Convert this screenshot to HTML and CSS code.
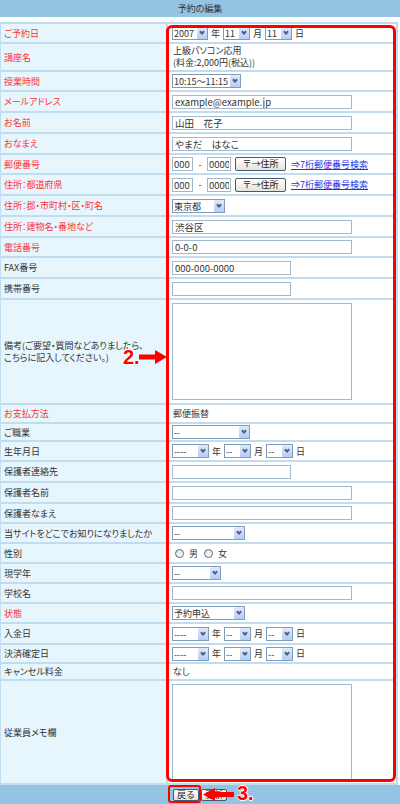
FILE: index.html
```html
<!DOCTYPE html>
<html lang="ja">
<head>
	<meta charset="UTF-8">
	<title>予約の編集</title>
	<link rel="stylesheet" href="styles.css">
</head>
<body>
<div class="page">
	<div class="title">予約の編集</div>
	<div class="form">
		<div class="row h20"><div class="label req">ご予約日</div><div class="value">
			<span class="sel w36"><select><option>2007</option></select></span>年
			<span class="sel w27"><select><option>11</option></select></span>月
			<span class="sel w27"><select><option>11</option></select></span>日
		</div></div>
		<div class="row h28"><div class="label req">講座名</div><div class="value text multi">上級パソコン応用<br>(料金:2,000円(税込))</div></div>
		<div class="row h20"><div class="label req">授業時間</div><div class="value">
			<span class="sel w69"><select><option>10:15〜11:15</option></select></span>
		</div></div>
		<div class="row"><div class="label req">メールアドレス</div><div class="value"><input class="txt wide" type="text" value="example@example.jp"></div></div>
		<div class="row"><div class="label req">お名前</div><div class="value"><input class="txt wide" type="text" value="山田　花子"></div></div>
		<div class="row"><div class="label req">おなまえ</div><div class="value"><input class="txt wide" type="text" value="やまだ　はなこ"></div></div>
		<div class="row h20"><div class="label req">郵便番号</div><div class="value zip">
			<input class="txt zip1" type="text" value="000"><span class="dash">-</span><input class="txt zip2" type="text" value="0000">
			<button class="btn addr">〒→住所</button><a href="#">⇒7桁郵便番号検索</a>
		</div></div>
		<div class="row"><div class="label req">住所：都道府県</div><div class="value zip">
			<input class="txt zip1" type="text" value="000"><span class="dash">-</span><input class="txt zip2" type="text" value="0000">
			<button class="btn addr">〒→住所</button><a href="#">⇒7桁郵便番号検索</a>
		</div></div>
		<div class="row"><div class="label req">住所：郡・市町村・区・町名</div><div class="value">
			<span class="sel w53"><select><option>東京都</option></select></span>
		</div></div>
		<div class="row"><div class="label req">住所：建物名・番地など</div><div class="value"><input class="txt wide" type="text" value="渋谷区"></div></div>
		<div class="row h20"><div class="label req">電話番号</div><div class="value"><input class="txt wide" type="text" value="0-0-0"></div></div>
		<div class="row"><div class="label">FAX番号</div><div class="value"><input class="txt narrow" type="text" value="000-000-0000"></div></div>
		<div class="row"><div class="label">携帯番号</div><div class="value"><input class="txt narrow" type="text"></div></div>
		<div class="row h105"><div class="label multi">備考(ご要望・質問などありましたら、<br>こちらに記入してください。)</div><div class="value"><textarea class="area"></textarea></div></div>
		<div class="row h19"><div class="label req">お支払方法</div><div class="value text">郵便振替</div></div>
		<div class="row h18"><div class="label">ご職業</div><div class="value">
			<span class="sel w78"><select><option>--</option></select></span>
		</div></div>
		<div class="row h20"><div class="label">生年月日</div><div class="value">
			<span class="sel w37"><select><option>----</option></select></span>年
			<span class="sel w27"><select><option>--</option></select></span>月
			<span class="sel w27"><select><option>--</option></select></span>日
		</div></div>
		<div class="row"><div class="label">保護者連絡先</div><div class="value"><input class="txt narrow" type="text"></div></div>
		<div class="row"><div class="label">保護者名前</div><div class="value"><input class="txt wide" type="text"></div></div>
		<div class="row h20"><div class="label">保護者なまえ</div><div class="value"><input class="txt wide" type="text"></div></div>
		<div class="row h20"><div class="label">当サイトをどこでお知りになりましたか</div><div class="value">
			<span class="sel w73"><select><option>--</option></select></span>
		</div></div>
		<div class="row h20"><div class="label">性別</div><div class="value radios">
			<label><input type="radio" name="sex">男</label>
			<label><input type="radio" name="sex">女</label>
		</div></div>
		<div class="row h20"><div class="label">現学年</div><div class="value">
			<span class="sel w49"><select><option>--</option></select></span>
		</div></div>
		<div class="row h20"><div class="label">学校名</div><div class="value"><input class="txt wide" type="text"></div></div>
		<div class="row h20"><div class="label req">状態</div><div class="value">
			<span class="sel w73"><select><option>予約申込</option></select></span>
		</div></div>
		<div class="row"><div class="label">入金日</div><div class="value">
			<span class="sel w37"><select><option>----</option></select></span>年
			<span class="sel w27"><select><option>--</option></select></span>月
			<span class="sel w27"><select><option>--</option></select></span>日
		</div></div>
		<div class="row h19"><div class="label">決済確定日</div><div class="value">
			<span class="sel w37"><select><option>----</option></select></span>年
			<span class="sel w27"><select><option>--</option></select></span>月
			<span class="sel w27"><select><option>--</option></select></span>日
		</div></div>
		<div class="row h17"><div class="label">キャンセル料金</div><div class="value text">なし</div></div>
		<div class="row h104"><div class="label">従業員メモ欄</div><div class="value"><textarea class="area"></textarea></div></div>
	</div>
	<div class="footer">
		<button class="btn">戻る</button>
		<button class="btn">更新</button>
	</div>

	<!-- 説明用の注釈 -->
	<div class="mark-area"></div>
	<div class="mark-back"></div>
	<div class="note note2">2.</div>
	<svg class="arrow arrow2" width="28" height="14" viewBox="0 0 28 14"><polygon points="0,4.5 16,4.5 16,0 28,7 16,14 16,9.5 0,9.5" fill="#f00"/></svg>
	<svg class="arrow arrow3" width="31" height="13" viewBox="0 0 31 13"><polygon points="0,6.5 12,0 12,4 31,4 31,9 12,9 12,13" fill="#f00"/></svg>
	<div class="note note3">3.</div>
</div>
</body>
</html>
```

FILE: styles.css
```css
*{
	margin: 0;
	padding: 0;
}
body{
	font-family: "Noto Sans CJK JP", sans-serif;
	font-size: 9px;
	color: #333;
	background: #fff;
	font-feature-settings: "palt";
}
.page{
	position: relative;
	width: 400px;
	height: 804px;
	overflow: hidden;
}
.title{
	height: 17px;
	line-height: 17px;
	background-color: #93c4e1;
	text-align: center;
	margin-bottom: 5px;
}
.form{
	width: 398px;
	box-sizing: border-box;
	border-top: 2px solid #c0dcee;
	border-left: 1px solid #c0dcee;
	border-right: 2px solid #c0dcee;
}
.row{
	display: grid;
	grid-template-columns: 167px 1fr;
	height: 21px;
	box-sizing: border-box;
	border-bottom: 2px solid #c0dcee;
}
.row.h17{ height: 17px; }
.row.h18{ height: 18px; }
.row.h19{ height: 19px; }
.row.h20{ height: 20px; }
.row.h28{ height: 28px; }
.row.h104{ height: 104px; }
.row.h105{ height: 105px; }
.label{
	display: flex;
	align-items: center;
	padding-left: 3px;
	background-color: #e7f5fd;
	border-right: 2px solid #c0dcee;
	white-space: nowrap;
}
.label.req{
	color: #f33;
}
.multi{
	line-height: 12px;
}
.value{
	display: flex;
	align-items: center;
	gap: 3px;
	padding-left: 4px;
	white-space: nowrap;
}
.value.text{
	padding-left: 5px;
}
.sel{
	position: relative;
	display: inline-block;
	height: 14px;
}
.sel select{
	-webkit-appearance: none;
	appearance: none;
	width: 100%;
	height: 14px;
	box-sizing: border-box;
	border: 1px solid #7f9db9;
	background: #fff;
	font-family: "Noto Sans CJK JP", sans-serif;
	font-size: 9px;
	color: #333;
	padding: 0 11px 0 1px;
}
.sel::before{
	content: "";
	position: absolute;
	right: 1px;
	top: 1px;
	width: 10px;
	height: 12px;
	background: linear-gradient(#e0eafd, #b7cbf5);
	border-radius: 1px;
}
.sel::after{
	content: "";
	position: absolute;
	right: 4px;
	top: 4px;
	width: 2px;
	height: 2px;
	border-right: 2px solid #4d6185;
	border-bottom: 2px solid #4d6185;
	transform: rotate(45deg);
}
.w27{ width: 27px; }
.w36{ width: 36px; }
.w37{ width: 37px; }
.w49{ width: 49px; }
.w53{ width: 53px; }
.w69{ width: 69px; }
.w73{ width: 73px; }
.w78{ width: 78px; }
.txt{
	height: 14px;
	box-sizing: border-box;
	border: 1px solid #a2b8cc;
	font-family: "Noto Sans CJK JP", sans-serif;
	font-size: 9.5px;
	color: #333;
	padding: 0 2px;
	font-feature-settings: "palt";
}
.wide{ width: 180px; }
.narrow{ width: 119px; }
.zip1{ width: 21px; padding: 0 1px; }
.zip2{ width: 24px; padding: 0 1px; }
.zip{
	gap: 0;
}
.dash{
	width: 14px;
	text-align: center;
}
.btn{
	height: 14px;
	box-sizing: border-box;
	border: 1px solid #3d5c7a;
	border-radius: 2px;
	background: linear-gradient(#fff, #e4e3dc);
	font-family: "Noto Sans CJK JP", sans-serif;
	font-size: 9px;
	line-height: 12px;
	color: #222;
	padding: 0 3px;
}
.addr{
	width: 51px;
	margin-left: 4px;
}
.zip a{
	margin-left: 5px;
	color: #2530e0;
}
.area{
	width: 180px;
	height: 97px;
	box-sizing: border-box;
	border: 1px solid #a2b8cc;
	resize: none;
	overflow-y: scroll;
}
.area::-webkit-scrollbar{
	width: 11px;
	background: #f5f5f1;
}
.area::-webkit-scrollbar-button:single-button{
	display: block;
	height: 11px;
	background: #eceae3;
	border: 1px solid #dcdad2;
}
.radios{
	gap: 6px;
	padding-left: 7px;
}
.radios label{
	display: flex;
	align-items: center;
	gap: 5px;
}
.radios input{
	-webkit-appearance: none;
	appearance: none;
	width: 9px;
	height: 9px;
	border: 1px solid #4e6f90;
	border-radius: 50%;
	background: linear-gradient(135deg, #dcdcd6, #fff);
}
.footer{
	height: 20px;
	background-color: #93c4e1;
	display: flex;
	justify-content: center;
	align-items: center;
	gap: 2px;
}
.footer .btn{
	height: 12px;
	line-height: 10px;
	padding: 0 2px;
	width: 26px;
}
.mark-area{
	position: absolute;
	left: 166px;
	top: 25px;
	width: 230px;
	height: 757px;
	box-sizing: border-box;
	border: 3px solid #f00;
	border-radius: 6px;
}
.mark-back{
	position: absolute;
	left: 168px;
	top: 785px;
	width: 33px;
	height: 18px;
	box-sizing: border-box;
	border: 2px solid #f00;
	border-radius: 3px;
}
.note{
	position: absolute;
	font-family: "Liberation Sans", sans-serif;
	font-weight: bold;
	font-size: 20px;
	line-height: 18px;
	color: #f00;
	text-shadow: 1px 0 #fff, -1px 0 #fff, 0 1px #fff, 0 -1px #fff;
}
.note2{
	left: 123px;
	top: 348px;
}
.note3{
	left: 237px;
	top: 784px;
}
.arrow{
	position: absolute;
}
.arrow2{
	left: 139px;
	top: 350px;
}
.arrow3{
	left: 203px;
	top: 788px;
}
```
